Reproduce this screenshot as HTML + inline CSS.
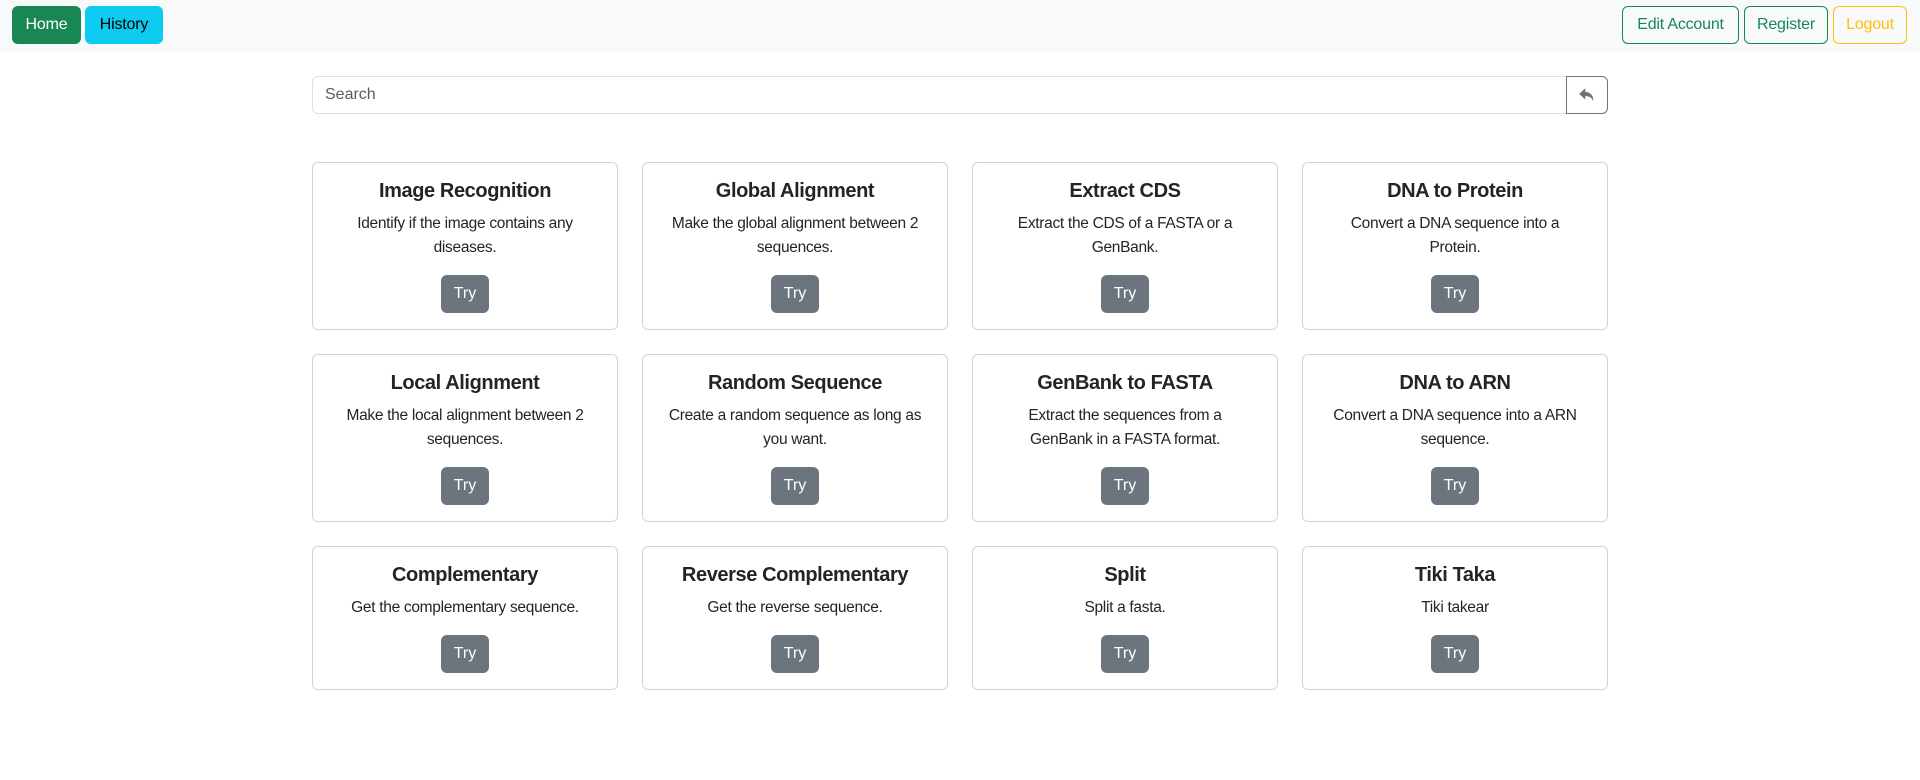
<!DOCTYPE html>
<html><head><meta charset="utf-8"><style>
*{box-sizing:border-box;margin:0;padding:0}
body{width:1920px;height:780px;background:#fff;font-family:"Liberation Sans",sans-serif;font-size:16px;color:#212529;position:relative;overflow:hidden}
.nav{position:absolute;left:0;top:0;width:1920px;height:52px;background:#f8f9fa}
.btn{position:absolute;height:38px;border-radius:6px;font-size:16px;line-height:36px;text-align:center;border:1px solid transparent;letter-spacing:-0.2px}
.card{position:absolute;width:306px;border:1px solid rgba(0,0,0,.175);border-radius:6px;padding:16px 4px;text-align:center;white-space:nowrap}
.card h5{font-size:20px;font-weight:bold;line-height:24px;margin-bottom:9px;letter-spacing:-0.4px}
.card p{line-height:24px;margin-bottom:15px;font-size:15.5px;letter-spacing:-0.3px}
.try{display:inline-block;width:48px;height:38px;line-height:38px;background:#6c757d;color:#fff;border-radius:6px}
</style></head><body>
<div class="nav">
<div class="btn" style="left:12px;top:6px;width:69px;background:#198754;color:#fff">Home</div>
<div class="btn" style="left:85px;top:6px;width:78px;background:#0dcaf0;color:#000">History</div>
<div class="btn" style="left:1622px;top:6px;width:117px;border-color:#198754;color:#198754">Edit Account</div>
<div class="btn" style="left:1744px;top:6px;width:84px;border-color:#198754;color:#198754">Register</div>
<div class="btn" style="left:1833px;top:6px;width:74px;border-color:#ffc107;color:#ffc107">Logout</div>
</div>
<div style="position:absolute;left:312px;top:76px;width:1255px;height:38px;border:1px solid #dee2e6;border-right:none;border-radius:6px 0 0 6px;padding-left:12px;line-height:36px;color:#595c5f">Search</div>
<div style="position:absolute;left:1566px;top:76px;width:42px;height:38px;border:1px solid #6c757d;border-radius:0 6px 6px 0;display:flex;align-items:center;justify-content:center">
<svg width="18" height="18" viewBox="0 0 16 16"><path d="M6.5 2 L1 7 L6.5 12 V9 C10 9 12 10 13.5 13.5 C14 9 11.5 5.5 6.5 5.2 Z" fill="#6c757d"/></svg></div>

<div class="card" style="left:312px;top:162px"><h5>Image Recognition</h5><p>Identify if the image contains any<br>diseases.</p><span class="try">Try</span></div>
<div class="card" style="left:642px;top:162px"><h5>Global Alignment</h5><p>Make the global alignment between 2<br>sequences.</p><span class="try">Try</span></div>
<div class="card" style="left:972px;top:162px"><h5>Extract CDS</h5><p>Extract the CDS of a FASTA or a<br>GenBank.</p><span class="try">Try</span></div>
<div class="card" style="left:1302px;top:162px"><h5>DNA to Protein</h5><p>Convert a DNA sequence into a<br>Protein.</p><span class="try">Try</span></div>

<div class="card" style="left:312px;top:354px"><h5>Local Alignment</h5><p>Make the local alignment between 2<br>sequences.</p><span class="try">Try</span></div>
<div class="card" style="left:642px;top:354px"><h5>Random Sequence</h5><p>Create a random sequence as long as<br>you want.</p><span class="try">Try</span></div>
<div class="card" style="left:972px;top:354px"><h5>GenBank to FASTA</h5><p>Extract the sequences from a<br>GenBank in a FASTA format.</p><span class="try">Try</span></div>
<div class="card" style="left:1302px;top:354px"><h5>DNA to ARN</h5><p>Convert a DNA sequence into a ARN<br>sequence.</p><span class="try">Try</span></div>

<div class="card" style="left:312px;top:546px"><h5>Complementary</h5><p>Get the complementary sequence.</p><span class="try">Try</span></div>
<div class="card" style="left:642px;top:546px"><h5>Reverse Complementary</h5><p>Get the reverse sequence.</p><span class="try">Try</span></div>
<div class="card" style="left:972px;top:546px"><h5>Split</h5><p>Split a fasta.</p><span class="try">Try</span></div>
<div class="card" style="left:1302px;top:546px"><h5>Tiki Taka</h5><p>Tiki takear</p><span class="try">Try</span></div>
</body></html>
